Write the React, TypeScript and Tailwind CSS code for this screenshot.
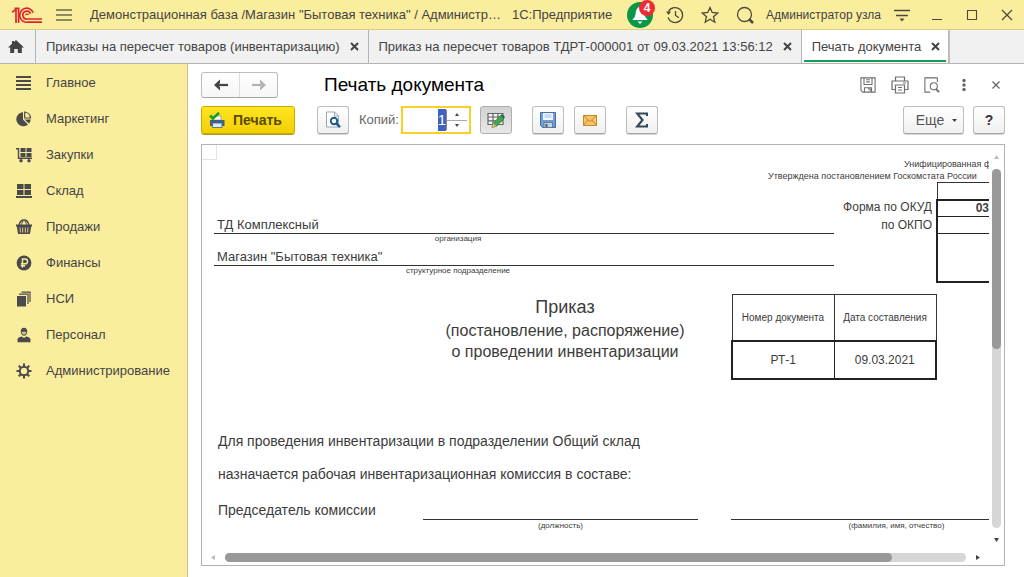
import { useEffect, useRef, type ReactNode } from "react";

function Logo() {
  return (
    <svg viewBox="0 0 32 18" className="h-[18px] w-8 shrink-0" fill="none" stroke="#e0262b" strokeWidth="1.7" role="img" aria-label="1С">
      <path d="M1.2 6.2 5 3.4V17" />
      <path d="M3.5 2.3H7.6V17" />
      <path d="M22.2 6.6A7 7 0 1 0 16.4 16.2H31" />
      <path d="M19.4 7.8A3.9 3.9 0 1 0 16.4 13H31" />
      <path d="M14.5 9.4a1.8 1.8 0 0 1 3.2-.6" strokeWidth="1.2" />
    </svg>
  );
}

const sectionIcons: Record<string, ReactNode> = {
  main: <path d="M0 1h15v2H0zM0 5h15v2H0zM0 9h15v2H0zM0 13h15v2H0z" />,
  marketing: (
    <>
      <path d="M7 1.2A7 7 0 1 0 12 13.400L7 8.500z" />
      <path d="M8.700 1a6.500 6.500 0 0 1 5.800 6H8.700z" fill="none" stroke="#4a4a4a" strokeWidth="1.200" />
      <path d="M8.500 8.500h6.300a7 7 0 0 1-1.900 4z" />
    </>
  ),
  purchases: (
    <>
      <path d="M0 1h3.200v9.500H16V12H1.800V2.400H0zM4.500 1h5v4h-5zM10.500 1h5v4h-5zM4.500 6h5v4h-5zM10.500 6h5v4h-5z" />
      <circle cx="5" cy="13.700" r="1.700" />
      <circle cx="13" cy="13.700" r="1.700" />
    </>
  ),
  stock: <path d="M1 1h6.500v5H1zM8.500 1H15v5H8.500zM1 7h6.500v5H1zM8.500 7H15v5H8.500zM0 13h16v2H0z" />,
  sales: (
    <>
      <path d="M3 6C4 2 6 1 8 1s4 1 5 5" fill="none" stroke="#4a4a4a" strokeWidth="1.300" />
      <path d="M5 6l2-4M11 6L9 2" fill="none" stroke="#4a4a4a" />
      <path d="M0 5.500h16v2h-.8L14 15H2L.8 7.500H0z" />
      <path d="M4 8.500l.5 5M6.700 8.500v5M9.300 8.500v5M12 8.500l-.5 5" stroke="#fbed9e" strokeWidth=".8" />
    </>
  ),
  finance: (
    <>
      <circle cx="8" cy="8" r="7.400" />
      <path d="M6.500 12.500V4h2.600a2.400 2.400 0 0 1 0 4.800H4.800M4.800 10.700h4.500" fill="none" stroke="#fbed9e" strokeWidth="1.400" />
    </>
  ),
  catalogs: (
    <>
      <path d="M1 5h9v10.500H1z" />
      <path d="M3 3.200h9V13M5.500 1.200H14V11" fill="none" stroke="#4a4a4a" strokeWidth="1.200" />
    </>
  ),
  staff: (
    <>
      <path d="M4.800 4.500C4.800 2 6 .8 8 .8s3.200 1.200 3.200 3.700C11.200 7 9.800 8.800 8 8.800S4.800 7 4.800 4.500z" />
      <path d="M5.800 4.800h4.400c0 1.700-1 3-2.200 3s-2.200-1.300-2.200-3z" fill="#cfc389" />
      <path d="M1.500 15.300v-2.500c0-2 2-2.800 4.200-3.300L8 11l2.300-1.500c2.200.5 4.200 1.300 4.200 3.300v2.500z" />
    </>
  ),
  admin: (
    <g fill="none" stroke="#4a4a4a">
      <circle cx="8" cy="8" r="4.200" strokeWidth="2" />
      <path d="M8 .5v3M8 12.500v3M.5 8h3M12.500 8h3M2.700 2.700l2.100 2.100M11.200 11.200l2.100 2.100M2.700 13.300l2.100-2.100M11.200 4.800l2.100-2.100" strokeWidth="2" />
    </g>
  ),
};

const sections = [
  { id: "main", label: "Главное" },
  { id: "marketing", label: "Маркетинг" },
  { id: "purchases", label: "Закупки" },
  { id: "stock", label: "Склад" },
  { id: "sales", label: "Продажи" },
  { id: "finance", label: "Финансы" },
  { id: "catalogs", label: "НСИ" },
  { id: "staff", label: "Персонал" },
  { id: "admin", label: "Администрирование" },
];

function Stroke({ size, children, width = "1.3" }: { size: string; children: ReactNode; width?: string }) {
  return (
    <svg viewBox="0 0 18 18" className={size} fill="none" stroke="currentColor" strokeWidth={width} aria-hidden="true">
      {children}
    </svg>
  );
}

function TitleButton({ label, children }: { label: string; children: ReactNode }) {
  return (
    <button type="button" aria-label={label} className="flex w-[35px] shrink-0 items-center justify-center text-[#4d4a3a]">
      {children}
    </button>
  );
}

function TitleBar() {
  return (
    <header className="flex h-[30px] items-center border-b border-[#d9cc86] bg-[#fbed9e] pl-[11px] text-[#444]">
      <Logo />
      <button type="button" aria-label="Меню" className="ml-[13px] mr-[18px] shrink-0">
        <svg viewBox="0 0 16 12" className="h-3 w-4" stroke="#6b6750" strokeWidth="1.3" aria-hidden="true">
          <path d="M0 1h16M0 6h16M0 11h16" />
        </svg>
      </button>
      <span className="w-[422px] shrink-0 whitespace-nowrap text-[13px]">Демонстрационная база /Магазин "Бытовая техника" / Администр…</span>
      <span className="w-[115px] shrink-0 whitespace-nowrap text-[13px]">1С:Предприятие</span>
      <button type="button" aria-label="Уведомления" className="relative shrink-0">
        <svg viewBox="0 0 26 26" className="size-[26px]" aria-hidden="true">
          <circle cx="13" cy="13" r="13" fill="#0d9648" />
          <path d="M13 4.500c-3 1-4.500 4-4.500 8-.5 2.500-2 4-3.200 5.500h15.400c-1.200-1.500-2.700-3-3.200-5.500 0-4-1.500-7-4.500-8zM10.500 19.500h5L13 22z" fill="#fff" />
        </svg>
        <span className="absolute -top-[2px] left-[12px] flex size-4 items-center justify-center rounded-full bg-[#ee2a32] text-[12px] font-bold leading-none text-white">4</span>
      </button>
      <div className="ml-1 flex h-full">
        <TitleButton label="История">
          <Stroke size="size-[18px]">
            <path d="M2.500 5.500A7.500 7.500 0 1 1 2 11.500M9.500 5v4.500l3.500 2.300" />
            <path d="M0 5.500h5L2.700 9z" fill="currentColor" stroke="none" />
          </Stroke>
        </TitleButton>
        <TitleButton label="Избранное">
          <Stroke size="size-[18px]">
            <path d="M9 1.500l2.200 5 5.500.5-4.200 3.700 1.300 5.500L9 13.300l-4.800 2.900 1.300-5.500L1.300 7l5.500-.5z" />
          </Stroke>
        </TitleButton>
        <TitleButton label="Поиск">
          <Stroke size="size-[18px]">
            <circle cx="8.500" cy="8.500" r="7" />
            <path d="M13 13l4 4" strokeWidth="2.500" />
          </Stroke>
        </TitleButton>
      </div>
      <a href="#user" className="ml-1 whitespace-nowrap text-[12px]">Администратор узла</a>
      <div className="ml-auto flex h-full">
        <TitleButton label="Настройки">
          <Stroke size="size-[18px]">
            <path d="M1 4.500h16M3 9.500h12" />
            <path d="M6.500 12.500h5L9 15.500z" fill="currentColor" stroke="none" />
          </Stroke>
        </TitleButton>
        <TitleButton label="Свернуть">
          <Stroke size="size-[18px]" width="1">
            <path d="M4 13.500h10" />
          </Stroke>
        </TitleButton>
        <TitleButton label="Развернуть">
          <Stroke size="size-[18px]" width="1.1">
            <path d="M4.500 4.500h9v9h-9z" />
          </Stroke>
        </TitleButton>
        <TitleButton label="Закрыть">
          <Stroke size="size-[18px]">
            <path d="M4 4l10 10M14 4L4 14" />
          </Stroke>
        </TitleButton>
      </div>
    </header>
  );
}

function Tab({ label, active = false }: { label: string; active?: boolean }) {
  return (
    <div className={active ? "flex border-r-2 border-[#bdbdbd] bg-white px-[2px]" : "flex border-r border-[#b5b5b5] px-[2px]"}>
      <div className={active ? "mb-px flex items-center gap-[10px] border-b-2 border-[#14a050] pl-2 pr-[6px] pt-[3px]" : "flex items-center gap-[10px] pl-2 pr-[7px]"}>
        <a href="#tab" className="whitespace-nowrap text-[13px]">{label}</a>
        <button type="button" aria-label={"Закрыть: " + label}>
          <svg viewBox="0 0 9 9" className="size-[9px]" stroke="#444" strokeWidth="2" aria-hidden="true">
            <path d="M1 1l7 7M8 1L1 8" />
          </svg>
        </button>
      </div>
    </div>
  );
}

function Tabs() {
  return (
    <nav aria-label="Открытые окна" className="flex h-[34px] border-b border-[#b5b5b5] bg-[#f1f1f1] text-[#444]">
      <a href="#home" aria-label="Начальная страница" className="flex w-9 items-center justify-center border-r border-[#b5b5b5]">
        <svg viewBox="0 0 16 14" className="mr-1 h-[14px] w-4" fill="#444" aria-hidden="true">
          <path d="M8 0l8 7.500h-2.200V13H9.800V9H6.200v4H2.200V7.500H0L4 3.800V1h2v1z" />
        </svg>
      </a>
      <Tab label="Приказы на пересчет товаров (инвентаризацию)" />
      <Tab label="Приказ на пересчет товаров ТДРТ-000001 от 09.03.2021 13:56:12" />
      <Tab label="Печать документа" active />
    </nav>
  );
}

function Sidebar() {
  return (
    <nav aria-label="Разделы" className="w-[188px] shrink-0 border-r border-[#c9c19a] bg-[#fbed9e] pt-px">
      <ul>
        {sections.map((s) => (
          <li key={s.id}>
            <a href={"#" + s.id} className="flex h-9 items-center gap-[14px] pl-4 text-[13px] text-[#444]">
              <svg viewBox="0 0 16 16" className="size-4 shrink-0" fill="#4a4a4a" aria-hidden="true">
                {sectionIcons[s.id]}
              </svg>
              {s.label}
            </a>
          </li>
        ))}
      </ul>
    </nav>
  );
}

const raised = "flex h-7 items-center justify-center rounded-[3px] border border-[#bdbdbd] border-b-[#a5a5a5] bg-linear-to-b from-white to-[#f0f0f0] shadow-[0_1px_0_#d5d5d5]";

function ToolButton({ label, children }: { label: string; children: ReactNode }) {
  return (
    <button type="button" aria-label={label} className={raised + " w-8"}>
      {children}
    </button>
  );
}

function CopiesField() {
  const ref = useRef<HTMLInputElement>(null);
  useEffect(() => {
    ref.current?.focus();
    ref.current?.select();
  }, []);
  return (
    <div className="flex h-7 w-[70px] border-2 border-[#fbcf26] bg-white">
      <input
        id="copies"
        ref={ref}
        defaultValue="1"
        className="w-[43px] py-[2px] text-right text-[15px] text-[#333] outline-none selection:bg-[#4160c0] selection:text-white"
      />
      <div className="my-[2px] mr-[2px] flex flex-1 flex-col border-l border-[#888]">
        <button type="button" aria-label="Больше" className="flex flex-1 items-center justify-center border-b border-[#aaa]">
          <svg viewBox="0 0 4 3" className="h-[3px] w-1" fill="#444" aria-hidden="true"><path d="M0 3h4L2 0z" /></svg>
        </button>
        <button type="button" aria-label="Меньше" className="flex flex-1 items-center justify-center">
          <svg viewBox="0 0 4 3" className="h-[3px] w-1" fill="#444" aria-hidden="true"><path d="M0 0h4L2 3z" /></svg>
        </button>
      </div>
    </div>
  );
}

function FormHeader() {
  return (
    <div className="flex items-center">
      <div className="flex h-[26px] w-[77px] rounded-[3px] border border-[#bdbdbd] border-b-[#a5a5a5] bg-linear-to-b from-white to-[#f6f6f6]">
        <button type="button" aria-label="Назад" className="flex flex-1 items-center justify-center border-r border-[#ddd] text-[#444]">
          <svg viewBox="0 0 16 12" className="h-3 w-4" fill="none" stroke="currentColor" strokeWidth="2.200" aria-hidden="true"><path d="M15 6H3" /><path d="M7 .5L1 6l6 5.500V8L5 6l2-2z" fill="currentColor" stroke="none" /></svg>
        </button>
        <button type="button" aria-label="Вперед" className="flex flex-1 items-center justify-center text-[#b3b3b3]">
          <svg viewBox="0 0 16 12" className="h-3 w-4" fill="none" stroke="currentColor" strokeWidth="2.200" aria-hidden="true"><path d="M1 6h12" /><path d="M9 .5L15 6l-6 5.500V8l2-2-2-2z" fill="currentColor" stroke="none" /></svg>
        </button>
      </div>
      <h1 className="ml-[46px] text-[19px] leading-[26px] text-black">Печать документа</h1>
      <div className="ml-auto flex items-center text-[#6e6e6e]">
        <button type="button" aria-label="Сохранить" className="flex w-8 justify-center">
          <Stroke size="size-4" width="1.2">
            <path d="M1 1h16v16H3l-2-2zM4.500 1v7.500h9V1M7 3h4M7 5.500h4M5 17v-5h8v5M9 13.500h2.500V16" />
          </Stroke>
        </button>
        <button type="button" aria-label="Печать" className="flex w-8 justify-center">
          <Stroke size="size-[18px]" width="1.2">
            <path d="M4.500 5V1h9v4M4 13.500H1V5h16v8.500h-3M4.500 9h9v8h-9zM7 11.500h4M7 14h4M12 7h3" />
          </Stroke>
        </button>
        <button type="button" aria-label="Просмотр" className="flex w-8 justify-center">
          <Stroke size="size-4" width="1.2">
            <path d="M7 17H1V1h14v5" />
            <circle cx="11" cy="10.500" r="4" />
            <path d="M13.500 13.500l3.500 3.500" strokeWidth="2" />
          </Stroke>
        </button>
        <button type="button" aria-label="Действия" className="flex w-8 justify-center">
          <svg viewBox="0 0 4 14" className="h-[14px] w-1" fill="#666" aria-hidden="true"><circle cx="2" cy="2.500" r="1.700" /><circle cx="2" cy="7" r="1.700" /><circle cx="2" cy="11.500" r="1.700" /></svg>
        </button>
        <button type="button" aria-label="Закрыть форму" className="flex w-8 justify-center">
          <svg viewBox="0 0 8 8" className="size-2" stroke="#666" strokeWidth="1.300" aria-hidden="true"><path d="M.5.5l7 7M7.500.5l-7 7" /></svg>
        </button>
      </div>
    </div>
  );
}

function Toolbar() {
  return (
    <div className="mt-2 flex items-center pr-3">
      <button type="button" className="flex h-7 w-[94px] items-center gap-2 rounded-[3px] border border-[#c9a800] bg-linear-to-b from-[#ffe61f] to-[#f3cf00] pl-[7px] text-[14px] font-bold text-[#5a4a00] shadow-[0_1px_0_#b39a1a]">
        <svg viewBox="0 0 16 16" className="size-4 shrink-0" aria-hidden="true">
          <path d="M4 8V4h8v4z" fill="#fff" stroke="#8aa0b5" strokeWidth=".8" />
          <path d="M1 8h14.500v6H1z" fill="#41617f" />
          <path d="M3.500 11h9.500v4.500H3.500z" fill="#dbe9f5" stroke="#41617f" strokeWidth=".8" />
          <path d="M1 3.500L4 6.500 10 .8" fill="none" stroke="#1c9a2b" strokeWidth="2.600" />
        </svg>
        Печать
      </button>
      <div className="ml-[22px]">
        <ToolButton label="Предварительный просмотр">
          <svg viewBox="0 0 16 18" className="h-[18px] w-4" fill="none" aria-hidden="true">
            <path d="M1.500 1h8l4 4v11h-12z" fill="#fff" stroke="#9aa7b3" />
            <path d="M9.500 1v4h4" stroke="#9aa7b3" />
            <circle cx="9" cy="10" r="3.200" stroke="#175a8c" strokeWidth="1.900" />
            <path d="M11.300 12.300l3.700 3.900" stroke="#175a8c" strokeWidth="2.400" />
          </svg>
        </ToolButton>
      </div>
      <label htmlFor="copies" className="ml-[10px] mr-[2px] text-[13px] text-[#666]">Копий:</label>
      <CopiesField />
      <button type="button" aria-label="Редактирование" aria-pressed="true" className="ml-[9px] flex h-7 w-8 items-center justify-center rounded-[3px] border border-[#b0b0b0] bg-linear-to-b from-[#d2d2d2] to-[#e8e8e8]">
        <svg viewBox="0 0 18 16" className="h-4 w-[18px]" fill="none" aria-hidden="true">
          <path d="M1 1.500h15v11H1zM1 5h15M1 8.800h15M6 1.500v11M11 1.500v11" fill="#f4f4f4" stroke="#666" strokeWidth="1.200" />
          <path d="M5 15.500l1.200-4.200L13.500 3.500l3.500 3.200-7.500 7.500z" fill="#43a84b" stroke="#2c7f38" strokeWidth=".8" />
          <path d="M5 15.500l1.200-4.200 3.300 2.900z" fill="#e9b46c" />
          <path d="M13.500 3.500L15 2l3 3-1.300 1.700z" fill="#2f6470" />
        </svg>
      </button>
      <div className="ml-5 flex gap-[10px]">
        <ToolButton label="Сохранить документ">
          <svg viewBox="0 0 16 16" className="size-4" aria-hidden="true">
            <path d="M.5.5h15v15h-13l-2-2z" fill="#6f9ed6" stroke="#3f6fac" />
            <path d="M3 1h10v7H3z" fill="#f3f7fb" />
            <path d="M4.500 3h7M4.500 5h7" stroke="#9fc0e2" />
            <path d="M4 10.500h8.500v5H4z" fill="#c7d0d6" stroke="#56738f" strokeWidth=".8" />
            <path d="M5.500 12h2v3h-2z" fill="#3f5f80" />
          </svg>
        </ToolButton>
        <ToolButton label="Отправить по почте">
          <svg viewBox="0 0 14 11" className="h-[11px] w-[14px]" fill="none" stroke="#c9862a" aria-hidden="true">
            <path d="M.5.5h13v10H.5z" fill="#f7c566" />
            <path d="M.5.5L7 6.500l6.500-6M.5 10.500L5 5M13.500 10.500L9 5" />
          </svg>
        </ToolButton>
      </div>
      <div className="ml-5">
        <ToolButton label="Сумма">
          <svg viewBox="0 0 13 16" className="h-4 w-[13px]" fill="none" stroke="#34495a" strokeWidth="2.200" aria-hidden="true">
            <path d="M12 4V1.500H2.200L7.500 8l-5.300 6.500H12V12" />
          </svg>
        </ToolButton>
      </div>
      <button type="button" className={raised + " ml-auto w-[61px] gap-2 pl-[6px] text-[14px] text-[#555]"}>
        Еще
        <svg viewBox="0 0 5 3" className="h-[3px] w-[5px]" fill="#444" aria-hidden="true"><path d="M0 0h5L2.500 3z" /></svg>
      </button>
      <button type="button" aria-label="Справка" className={raised + " ml-[9px] w-8 text-[14px] font-bold text-[#333]"}>?</button>
    </div>
  );
}

function PrintedForm() {
  return (
    <article className="flex w-[860px] shrink-0 flex-col text-[#3c3c3c]">
      <div className="-mb-[2px] size-[15px] border-b border-r border-[#e3e3e3]" />
      <div className="whitespace-nowrap pl-[566px] text-[9px] leading-[12px]">
        <p className="pl-[136px]">Унифицированная форма</p>
        <p>Утверждена постановлением Госкомстата России</p>
      </div>
      <div className="flex">
        <div className="ml-3 w-[620px] pt-[35px]">
          <p className="border-b border-[#333] pl-[3px] text-[13px] leading-[16px]">ТД Комплексный</p>
          <p className="pr-[132px] text-center text-[8px] leading-[10px]">организация</p>
          <p className="mt-[5px] border-b border-[#333] pl-[3px] text-[13px] leading-[16px]">Магазин "Бытовая техника"</p>
          <p className="pr-[132px] text-center text-[8px] leading-[10px]">структурное подразделение</p>
        </div>
        <div className="flex-1 whitespace-nowrap pr-1 pt-4 text-right text-[12px] leading-[18px]">
          <p>Форма по ОКУД</p>
          <p>по ОКПО</p>
        </div>
        <table className="h-[101px] w-[126px] border-collapse text-center">
          <tbody>
            <tr className="h-[17px]"><td className="border border-[#333] p-0 text-[12px] leading-[14px]">Код</td></tr>
            <tr className="h-[17px]"><td className="border-x-2 border-b border-t-2 border-[#222] p-0 text-[12px] font-bold leading-[14px]">0317018</td></tr>
            <tr className="h-[17px]"><td className="border-x-2 border-b border-[#222] p-0" /></tr>
            <tr><td className="border-x-2 border-b-2 border-[#222] p-0" /></tr>
          </tbody>
        </table>
      </div>
      <div className="mt-[11px] flex">
        <div className="ml-[197px] w-[332px] text-center text-[16px] leading-[21px]">
          <h2 className="text-[18px] leading-[26px]">Приказ</h2>
          <p>(постановление, распоряжение)</p>
          <p>о проведении инвентаризации</p>
        </div>
        <table className="w-[206px] table-fixed border-collapse text-center">
          <tbody>
            <tr className="h-[46px]">
              <th scope="col" className="whitespace-nowrap border border-[#333] p-0 text-[10px] font-normal">Номер документа</th>
              <th scope="col" className="whitespace-nowrap border border-[#333] p-0 text-[10px] font-normal">Дата составления</th>
            </tr>
            <tr className="h-[38px]">
              <td className="border-y-2 border-l-2 border-r border-[#222] p-0 text-[12px]">РТ-1</td>
              <td className="border-y-2 border-r-2 border-[#222] p-0 text-[12px]">09.03.2021</td>
            </tr>
          </tbody>
        </table>
      </div>
      <div className="mt-[45px] pl-4 text-[14px] leading-[33px]">
        <p>Для проведения инвентаризации в подразделении Общий склад</p>
        <p>назначается рабочая инвентаризационная комиссия в составе:</p>
      </div>
      <div className="flex pl-4">
        <p className="w-[205px] pt-[11px] text-[14px] leading-[16px]">Председатель комиссии</p>
        <p className="mt-7 w-[275px] border-t border-[#333] text-center text-[8px] leading-[11px]">(должность)</p>
        <p className="ml-[33px] mt-7 flex-1 border-t border-[#333] text-center text-[8px] leading-[11px]">(фамилия, имя, отчество)</p>
      </div>
    </article>
  );
}

function DocumentView() {
  return (
    <section aria-label="Печатная форма" className="mr-[19px] mt-[10px] flex flex-1 flex-col border border-[#b3b3b3]">
      <div className="flex flex-1">
        <div className="flex w-0 flex-1 overflow-hidden">
          <PrintedForm />
        </div>
        <div className="flex w-[15px] flex-col items-center pb-[2px] pt-[10px]">
          <svg viewBox="0 0 5 4" className="h-1 w-[5px]" fill="#bbb" aria-hidden="true"><path d="M0 4h5L2.500 0z" /></svg>
          <div className="my-[10px] w-[9px] flex-1 rounded-full bg-[#d6d6d6]">
            <div className="h-1/2 rounded-full bg-[#999]" />
          </div>
          <svg viewBox="0 0 5 4" className="h-1 w-[5px]" fill="#444" aria-hidden="true"><path d="M0 0h5L2.500 4z" /></svg>
        </div>
      </div>
      <div className="flex h-[21px] items-center gap-[10px] pl-[9px] pr-[24px] pt-[5px]">
        <svg viewBox="0 0 4 5" className="h-[5px] w-1" fill="#bbb" aria-hidden="true"><path d="M4 0v5L0 2.500z" /></svg>
        <div className="h-[9px] flex-1 rounded-full bg-[#d6d6d6]">
          <div className="h-full w-[90%] rounded-full bg-[#999]" />
        </div>
        <svg viewBox="0 0 4 5" className="h-[5px] w-1" fill="#444" aria-hidden="true"><path d="M0 0v5l4-2.500z" /></svg>
      </div>
    </section>
  );
}

export default function App() {
  return (
    <div className="flex min-h-screen flex-col overflow-x-hidden bg-white font-['Liberation_Sans',Arial,sans-serif]">
      <TitleBar />
      <Tabs />
      <div className="flex flex-1">
        <Sidebar />
        <main className="flex min-w-0 flex-1 flex-col pb-[11px] pl-[13px] pt-2">
          <div className="pr-3">
            <FormHeader />
          </div>
          <div className="pr-[7px]">
            <Toolbar />
          </div>
          <DocumentView />
        </main>
      </div>
    </div>
  );
}
